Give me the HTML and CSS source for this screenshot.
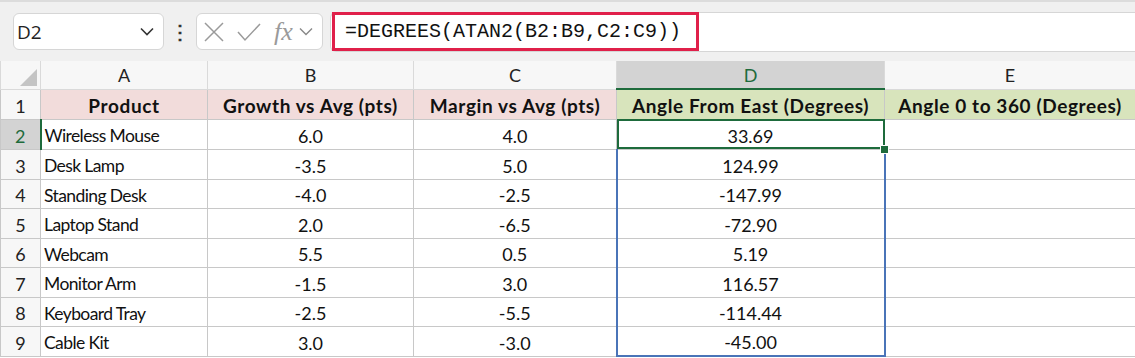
FILE: index.html
```html
<!DOCTYPE html>
<html lang="en">
<head>
  <meta charset="UTF-8">
  <title>ATAN2 degrees</title>
  <link rel="stylesheet" href="styles.css">
</head>
<body>

  <div class="toolbar">
    <div class="namebox">
      <span>D2</span>
      <svg width="14" height="9" viewBox="0 0 14 9"><path d="M1 1.5 L7 7.5 L13 1.5" fill="none" stroke="#333" stroke-width="1.6"/></svg>
    </div>
    <div class="dots">⋮</div>
    <div class="fxbox">
      <svg width="20" height="20" viewBox="0 0 20 20"><path d="M1 1 L19 19 M19 1 L1 19" stroke="#9a9a9a" stroke-width="1.5"/></svg>
      <svg width="26" height="22" viewBox="0 0 26 22"><path d="M2 11 L9 19 L24 3" fill="none" stroke="#9a9a9a" stroke-width="1.5"/></svg>
      <span class="fx">fx</span>
      <svg width="14" height="9" viewBox="0 0 14 9"><path d="M1 1.5 L7 7.5 L13 1.5" fill="none" stroke="#888" stroke-width="1.4"/></svg>
    </div>
    <div class="formula">
      <div class="formula-text">=DEGREES(ATAN2(B2:B9,C2:C9))</div>
    </div>
  </div>

  <table class="sheet">
    <colgroup>
      <col style="width:40px">
      <col style="width:167px">
      <col style="width:206px">
      <col style="width:203px">
      <col style="width:268px">
      <col style="width:251px">
    </colgroup>
    <tr class="colheads">
      <th class="corner"><span class="tri"></span></th>
      <th>A</th><th>B</th><th>C</th><th class="selcol">D</th><th>E</th>
    </tr>
    <tr class="tall">
      <th class="rowhead">1</th>
      <td class="hdr pink">Product</td>
      <td class="hdr pink">Growth vs Avg (pts)</td>
      <td class="hdr pink">Margin vs Avg (pts)</td>
      <td class="hdr green">Angle From East (Degrees)</td>
      <td class="hdr green">Angle 0 to 360 (Degrees)</td>
    </tr>
    <tr class="tall">
      <th class="rowhead selrow">2</th>
      <td class="name">Wireless Mouse</td><td class="num">6.0</td><td class="num">4.0</td>
      <td class="num active">33.69<span class="handle"></span></td><td></td>
    </tr>
    <tr class="tall">
      <th class="rowhead">3</th>
      <td class="name">Desk Lamp</td><td class="num">-3.5</td><td class="num">5.0</td>
      <td class="num spill">124.99</td><td></td>
    </tr>
    <tr>
      <th class="rowhead">4</th>
      <td class="name">Standing Desk</td><td class="num">-4.0</td><td class="num">-2.5</td>
      <td class="num spill">-147.99</td><td></td>
    </tr>
    <tr class="tall">
      <th class="rowhead">5</th>
      <td class="name">Laptop Stand</td><td class="num">2.0</td><td class="num">-6.5</td>
      <td class="num spill">-72.90</td><td></td>
    </tr>
    <tr>
      <th class="rowhead">6</th>
      <td class="name">Webcam</td><td class="num">5.5</td><td class="num">0.5</td>
      <td class="num spill">5.19</td><td></td>
    </tr>
    <tr class="tall">
      <th class="rowhead">7</th>
      <td class="name">Monitor Arm</td><td class="num">-1.5</td><td class="num">3.0</td>
      <td class="num spill">116.57</td><td></td>
    </tr>
    <tr>
      <th class="rowhead">8</th>
      <td class="name">Keyboard Tray</td><td class="num">-2.5</td><td class="num">-5.5</td>
      <td class="num spill">-114.44</td><td></td>
    </tr>
    <tr class="tall">
      <th class="rowhead">9</th>
      <td class="name">Cable Kit</td><td class="num">3.0</td><td class="num">-3.0</td>
      <td class="num spill last">-45.00</td><td></td>
    </tr>
  </table>

</body>
</html>
```

FILE: styles.css
```css
body {
  margin: 0;
  background-color: #fff;
  font-family: Lato, "Noto Sans", sans-serif;
  color: #111;
  overflow: hidden;
}
.toolbar {
  height: 61px;
  background-color: #f0f0f0;
  border-top: 2px solid #dcdcdc;
  box-sizing: border-box;
  display: flex;
  align-items: center;
  padding-left: 13px;
}
.namebox {
  width: 151px;
  height: 37px;
  box-sizing: border-box;
  background-color: #fff;
  border: 1px solid #d6d6d6;
  border-radius: 6px;
  display: flex;
  align-items: center;
  justify-content: space-between;
  padding: 0 9px 0 3px;
  font-family: "Open Sans", sans-serif;
  font-size: 19px;
  color: #222;
}
.dots {
  width: 32px;
  text-align: center;
  font-size: 20px;
  font-weight: bold;
  color: #333;
}
.fxbox {
  width: 127px;
  height: 37px;
  box-sizing: border-box;
  background-color: #fff;
  border: 1px solid #d6d6d6;
  border-radius: 6px;
  display: flex;
  align-items: center;
  gap: 12px;
  padding-left: 7px;
}
.fx {
  font-family: "Liberation Serif", serif;
  font-style: italic;
  font-size: 26px;
  line-height: 1;
  color: #9a9a9a;
  margin-right: -6px;
}
.formula {
  flex: 1;
  height: 38px;
  margin-left: 7px;
  background-color: #fff;
  border-top: 1px solid #d6d6d6;
  border-left: 1px solid #d6d6d6;
  border-bottom: 1px solid #d6d6d6;
  border-radius: 6px 0 0 6px;
  display: flex;
  align-items: center;
}
.formula-text {
  border: 3px solid #e0204a;
  height: 39px;
  box-sizing: border-box;
  display: flex;
  align-items: center;
  padding: 0 15px 0 10px;
  margin-left: 1px;
  font-family: "Liberation Mono", monospace;
  font-size: 20px;
  color: #111;
}
.sheet {
  border-collapse: collapse;
  table-layout: fixed;
  width: 1135px;
  font-size: 18px;
}
.sheet td, .sheet th {
  height: 29px;
  padding: 3px 3px 0;
  box-sizing: border-box;
  border: 1px solid #c8c8c8;
  white-space: nowrap;
  overflow: hidden;
}
.sheet tr.tall td, .sheet tr.tall th {
  height: 30px;
}
.sheet th {
  font-weight: normal;
  background-color: #f7f7f7;
  color: #222;
}
.colheads th {
  height: 28px;
  padding-top: 0;
  border-top: none;
  border-color: #dadada;
}
.corner {
  position: relative;
}
.tri {
  position: absolute;
  right: 3px;
  bottom: 3px;
  width: 0;
  height: 0;
  border-left: 17px solid transparent;
  border-bottom: 17px solid #c4c4c4;
}
.selcol {
  background-color: #d3d3d3 !important;
  color: #1e6b3c !important;
  border-bottom: 2px solid #1e6b3c !important;
}
.rowhead {
  text-align: center;
  color: #333;
}
.selrow {
  background-color: #d3d3d3 !important;
  color: #1e6b3c !important;
  border-right: 2px solid #1e6b3c !important;
}
.hdr {
  font-weight: bold;
  font-size: 19px;
  letter-spacing: 0.6px;
  text-align: center;
}
.name {
  font-size: 17.5px;
  letter-spacing: -0.6px;
}
.pink {
  background-color: #f2dcdb;
}
.green {
  background-color: #d8e4bc;
}
.num {
  text-align: center;
}
.active {
  position: relative;
  outline: 2px solid #1e6b3c;
  outline-offset: -2px;
  overflow: visible !important;
}
.handle {
  position: absolute;
  right: -5px;
  bottom: -5px;
  width: 7px;
  height: 7px;
  background-color: #1e6b3c;
  border: 1px solid #fff;
  z-index: 2;
}
.spill {
  border-left: 2px solid #4a74b8 !important;
  border-right: 2px solid #4a74b8 !important;
}
.last {
  border-bottom: 2px solid #4a74b8 !important;
}
```
